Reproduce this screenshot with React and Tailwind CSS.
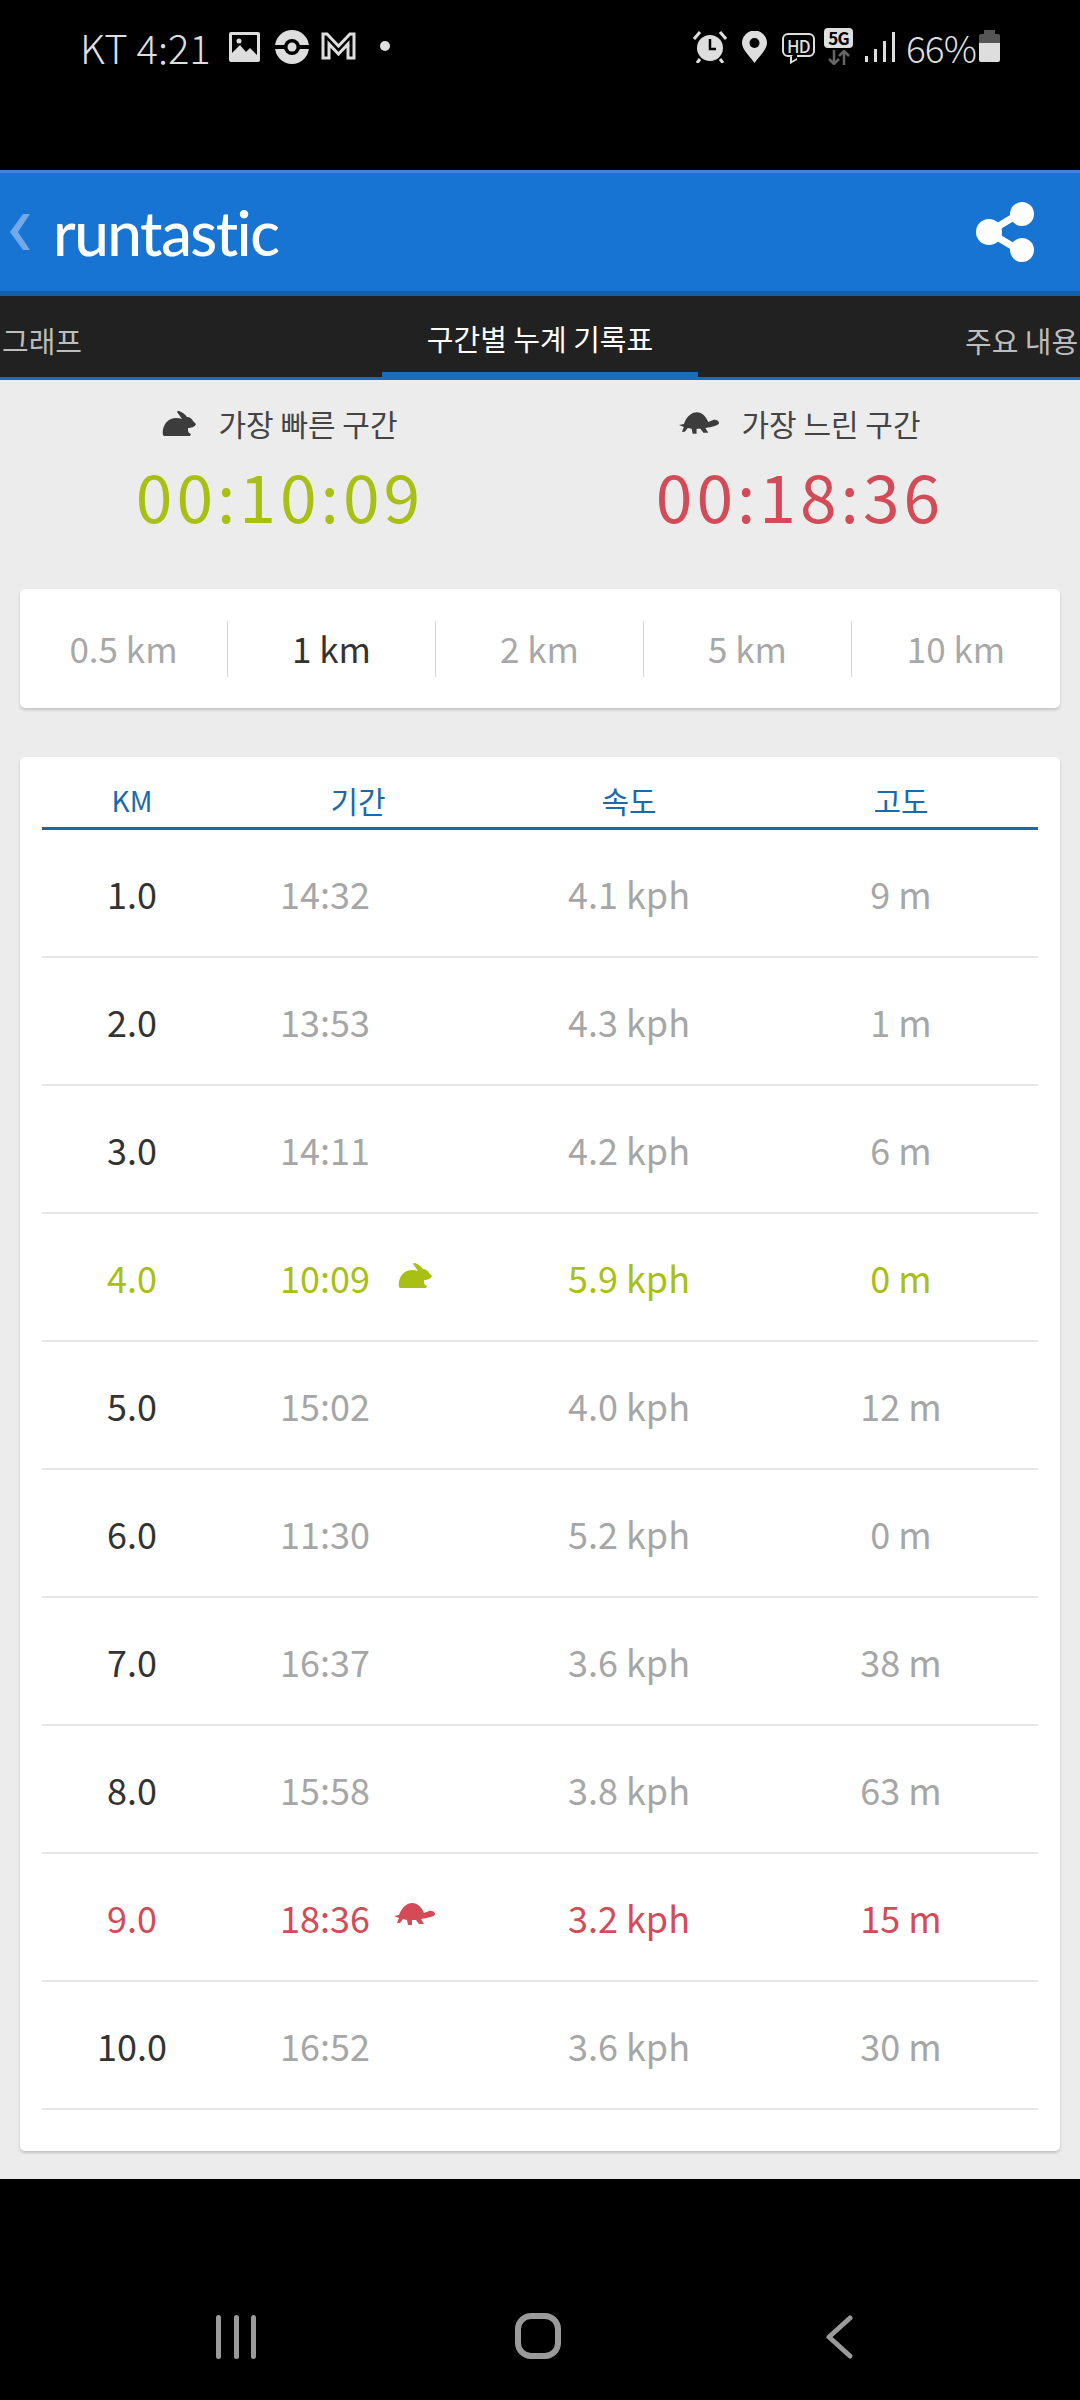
const FONT = "font-['Noto_Sans_CJK_KR','Noto_Sans',sans-serif]";

const splits = [
    { km: "1.0", time: "14:32", speed: "4.1 kph", alt: "9 m" },
    { km: "2.0", time: "13:53", speed: "4.3 kph", alt: "1 m" },
    { km: "3.0", time: "14:11", speed: "4.2 kph", alt: "6 m" },
    { km: "4.0", time: "10:09", speed: "5.9 kph", alt: "0 m", kind: "fast" },
    { km: "5.0", time: "15:02", speed: "4.0 kph", alt: "12 m" },
    { km: "6.0", time: "11:30", speed: "5.2 kph", alt: "0 m" },
    { km: "7.0", time: "16:37", speed: "3.6 kph", alt: "38 m" },
    { km: "8.0", time: "15:58", speed: "3.8 kph", alt: "63 m" },
    { km: "9.0", time: "18:36", speed: "3.2 kph", alt: "15 m", kind: "slow" },
    { km: "10.0", time: "16:52", speed: "3.6 kph", alt: "30 m" },
];

const distances = ["0.5 km", "1 km", "2 km", "5 km", "10 km"];

function Rabbit({ className }) {
    return (
        <svg viewBox="0 0 34 25" className={className} fill="currentColor">
            <path d="M1 24C0 19 2 11 9 8C13 6.5 17 7 20 8L15 1C15 0 16 0 17 0C20 1 23 3 25 6C28 6 30 8 31 10L34 13C33 16 29 17 26 17C26 20 26 22 29 23L28 25L2 25Z" />
        </svg>
    );
}

function Turtle({ className }) {
    return (
        <svg viewBox="0 0 41 22" className={className} fill="currentColor">
            <path d="M0 13L5 12C8 4 13 0 18 0C24 0 28 5 30 10L35 8C38 7 41 9 41 11C41 13 37 14 33 15L27 16L30 21L25 21L22 17L18 17L18 22L14 22L13 17L9 16L6 20L3 20L5 15Z" />
        </svg>
    );
}

function StatusBar() {
    return (
        <div className="h-[170px] flex items-start pt-[28px] text-[#dedede] shrink-0">
            <span className="ml-[80px] w-[149px] text-[40px] leading-[38px] font-light whitespace-nowrap">KT 4:21</span>

            {/* gallery */}
            <svg viewBox="0 0 31 30" className="w-[31px] h-[30px] mt-[4px]">
                <rect width="31" height="30" rx="2" fill="#dedede" />
                <rect x="3" y="3" width="25" height="22" fill="#000" />
                <path d="M3 25L3 21L11 13L17 20L21 16L28 23L28 25Z" fill="#dedede" />
                <circle cx="10" cy="9" r="2.5" fill="#dedede" />
            </svg>

            {/* pokeball style app icon */}
            <svg viewBox="0 0 34 34" className="w-[34px] h-[34px] ml-[15px] mt-[2px]">
                <circle cx="17" cy="17" r="17" fill="#dedede" />
                <rect y="15" width="34" height="4" fill="#000" />
                <circle cx="17" cy="17" r="8" fill="#000" />
                <circle cx="17" cy="17" r="4.5" fill="#dedede" />
            </svg>

            {/* gmail */}
            <svg viewBox="0 0 35 28" className="w-[35px] h-[28px] ml-[12px] mt-[4px]" fill="none" stroke="#dedede" strokeWidth="3">
                <path d="M2 26V2H6L17.5 14L29 2H33V26H27V12L17.5 22L8 12V26Z" />
            </svg>

            <span className="w-[10px] h-[10px] ml-[24px] mt-[13px] rounded-full bg-[#dedede]" />

            {/* alarm */}
            <svg viewBox="0 0 34 32" className="w-[34px] h-[32px] ml-[303px] mt-[3px]">
                <circle cx="17" cy="17" r="13" fill="#dedede" />
                <path d="M17 8V18H23" stroke="#000" strokeWidth="2.5" fill="none" />
                <path d="M1 8L7 1M33 8L27 1M7 28L4 32M27 28L30 32" stroke="#dedede" strokeWidth="3" fill="none" />
            </svg>

            {/* pin */}
            <svg viewBox="0 0 25 32" className="w-[25px] h-[32px] ml-[15px] mt-[3px]">
                <path d="M12.5 32C8 25 0 19 0 12A12.5 12.5 0 0 1 25 12C25 19 17 25 12.5 32Z" fill="#dedede" />
                <circle cx="12.5" cy="12" r="5" fill="#000" />
            </svg>

            {/* hd */}
            <div className="relative w-[33px] h-[24px] ml-[15px] mt-[5px] border-2 border-[#dedede] rounded-[6px] flex items-center justify-center">
                <span className="text-[17px] leading-none font-medium tracking-tighter">HD</span>
                <span className="absolute left-[6px] top-[20px] w-[7px] h-[7px] border-l-2 border-b-2 border-[#dedede] bg-black skew-y-[-30deg]" />
            </div>

            {/* 5g */}
            <div className="w-[29px] ml-[9px] flex flex-col items-center">
                <span className="w-[29px] h-[20px] bg-[#dedede] text-black rounded-[4px] text-[17px] leading-[20px] font-bold text-center tracking-tighter">5G</span>
                <svg viewBox="0 0 24 15" className="w-[24px] h-[15px] mt-[2px]" fill="none" stroke="#666" strokeWidth="2.5">
                    <path d="M7 0V14M2 9L7 14L12 9M17 15V1M12 6L17 1L22 6" />
                </svg>
            </div>

            {/* signal */}
            <div className="h-[30px] ml-[12px] mt-[4px] flex items-end gap-[6px]">
                <span className="w-[3px] h-[6px] bg-[#dedede]" />
                <span className="w-[3px] h-[13px] bg-[#dedede]" />
                <span className="w-[3px] h-[21px] bg-[#dedede]" />
                <span className="w-[3px] h-[30px] bg-[#dedede]" />
            </div>

            <span className="ml-[11px] w-[73px] text-[37px] leading-[38px] font-light tracking-tight">66%</span>

            {/* battery */}
            <div className="w-[21px] mt-[2px] flex flex-col items-center">
                <span className="w-[11px] h-[4px] bg-[#555]" />
                <span className="w-[21px] h-[9px] bg-[#555] rounded-t-[2px]" />
                <span className="w-[21px] h-[19px] bg-[#dedede] rounded-b-[2px]" />
            </div>
        </div>
    );
}

function Header() {
    return (
        <div className="h-[126px] shrink-0 bg-[#1874d2] border-t-[3px] border-b-[5px] border-t-[#3f85d8] border-b-[#1560ac] flex items-center">
            <svg viewBox="0 0 20 36" className="w-[20px] h-[36px] ml-[10px]" fill="#74a9e8">
                <path d="M13 0H20L8 18L20 36H13L0 18Z" />
            </svg>
            <span className="ml-[23px] text-white text-[62px] leading-none font-['Lato',sans-serif] font-medium tracking-tight">
                runtastic
            </span>
            <svg viewBox="0 0 60 60" className="w-[60px] h-[60px] ml-auto mr-[44px]" fill="#fff" stroke="#fff">
                <path d="M13 30L46 10M13 30L46 50" strokeWidth="7" fill="none" />
                <circle cx="13" cy="30" r="13" stroke="none" />
                <circle cx="46" cy="12" r="12" stroke="none" />
                <circle cx="46" cy="48" r="12" stroke="none" />
            </svg>
        </div>
    );
}

function Tabs() {
    return (
        <div className="h-[84px] shrink-0 bg-[#212121] border-b-[3px] border-[#1a6db8] flex text-[29px] leading-none overflow-hidden whitespace-nowrap">
            <div className="w-[382px] pl-[2px] pt-[8px] flex items-center text-[#bdbdbd]">그래프</div>
            <div className="w-[316px] h-[81px] pt-[8px] flex items-center justify-center text-white border-b-[5px] border-[#1a6db8]">
                구간별 누계 기록표
            </div>
            <div className="pl-[267px] pt-[8px] flex items-center text-[#bdbdbd]">주요 내용</div>
        </div>
    );
}

function Record({ icon, label, time, color }) {
    return (
        <div className="w-[520px] flex flex-col items-center">
            <div className="flex items-center h-[44px] text-[30px] text-[#444]">
                {icon}
                <span className="ml-[22px]">{label}</span>
            </div>
            <div className={`mt-[9px] text-[66px] leading-[80px] tracking-[4px] ${color}`}>{time}</div>
        </div>
    );
}

function DistancePicker() {
    return (
        <div className="mx-[20px] mt-[55px] h-[119px] bg-white rounded-[5px] shadow-[0_2px_3px_rgba(0,0,0,0.18)] grid grid-cols-5 items-center">
            {distances.map((d, i) => (
                <div
                    key={d}
                    className={`h-[56px] flex items-center justify-center text-[35px] ${i < 4 ? "border-r border-[#d4d4d4]" : ""} ${i === 1 ? "text-[#333]" : "text-[#a8a8a8]"}`}
                >
                    {d}
                </div>
            ))}
        </div>
    );
}

function SplitRow({ row }) {
    let color = "text-[#a6a6a6]";
    let kmColor = "text-[#333]";
    if (row.kind === "fast") {
        color = "text-[#a8c014]";
        kmColor = color;
    }
    if (row.kind === "slow") {
        color = "text-[#d24b57]";
        kmColor = color;
    }

    return (
        <div className="h-[128px] border-b-2 border-[#e6e6e6] grid grid-cols-[180px_272px_270px_274px] items-center text-[36px] leading-none">
            <div className={`text-center ${kmColor}`}>{row.km}</div>
            <div className={`pl-[58px] flex items-center ${color}`}>
                <span className="w-[118px]">{row.time}</span>
                {row.kind === "fast" && <Rabbit className="w-[34px] h-[25px] -mt-[4px]" />}
                {row.kind === "slow" && <Turtle className="w-[41px] h-[22px] -ml-[4px] -mt-[6px]" />}
            </div>
            <div className={`text-center ${color}`}>{row.speed}</div>
            <div className={`text-center ${color}`}>{row.alt}</div>
        </div>
    );
}

function SplitTable() {
    return (
        <div className="mx-[20px] mt-[49px] h-[1394px] bg-white rounded-[5px] shadow-[0_2px_3px_rgba(0,0,0,0.18)] px-[22px]">
            <div className="h-[73px] pt-[16px] border-b-[3px] border-[#1a69ac] grid grid-cols-[180px_272px_270px_274px] items-center text-center text-[30px] leading-none text-[#1a69ac]">
                <div className="text-[28px]">KM</div>
                <div>기간</div>
                <div>속도</div>
                <div>고도</div>
            </div>
            {splits.map((row) => (
                <SplitRow key={row.km} row={row} />
            ))}
        </div>
    );
}

function NavBar() {
    return (
        <div className="flex-1 flex items-start pt-[136px]">
            <div className="ml-[216px] w-[40px] h-[44px] flex justify-between">
                <span className="w-[5px] rounded-full bg-[#9a9a9a]" />
                <span className="w-[5px] rounded-full bg-[#9a9a9a]" />
                <span className="w-[5px] rounded-full bg-[#9a9a9a]" />
            </div>
            <div className="ml-[259px] -mt-[2px] w-[46px] h-[46px] rounded-[16px] border-[6px] border-[#9a9a9a]" />
            <svg viewBox="0 0 27 44" className="ml-[265px] w-[27px] h-[44px]" fill="none" stroke="#9a9a9a" strokeWidth="5" strokeLinecap="round" strokeLinejoin="round">
                <path d="M24 3L3 22L24 41" />
            </svg>
        </div>
    );
}

export default function App() {
    return (
        <div className={`w-[1080px] h-[2400px] bg-black flex flex-col overflow-hidden ${FONT}`}>
            <StatusBar />
            <Header />
            <Tabs />
            <div className="h-[1799px] shrink-0 bg-[#ececec]">
                <div className="pt-[21px] flex justify-center">
                    <Record
                        icon={<Rabbit className="w-[34px] h-[25px] text-[#3c3c3c]" />}
                        label="가장 빠른 구간"
                        time="00:10:09"
                        color="text-[#a8c014]"
                    />
                    <Record
                        icon={<Turtle className="w-[40px] h-[22px] text-[#3c3c3c]" />}
                        label="가장 느린 구간"
                        time="00:18:36"
                        color="text-[#d24b57]"
                    />
                </div>
                <DistancePicker />
                <SplitTable />
            </div>
            <NavBar />
        </div>
    );
}
